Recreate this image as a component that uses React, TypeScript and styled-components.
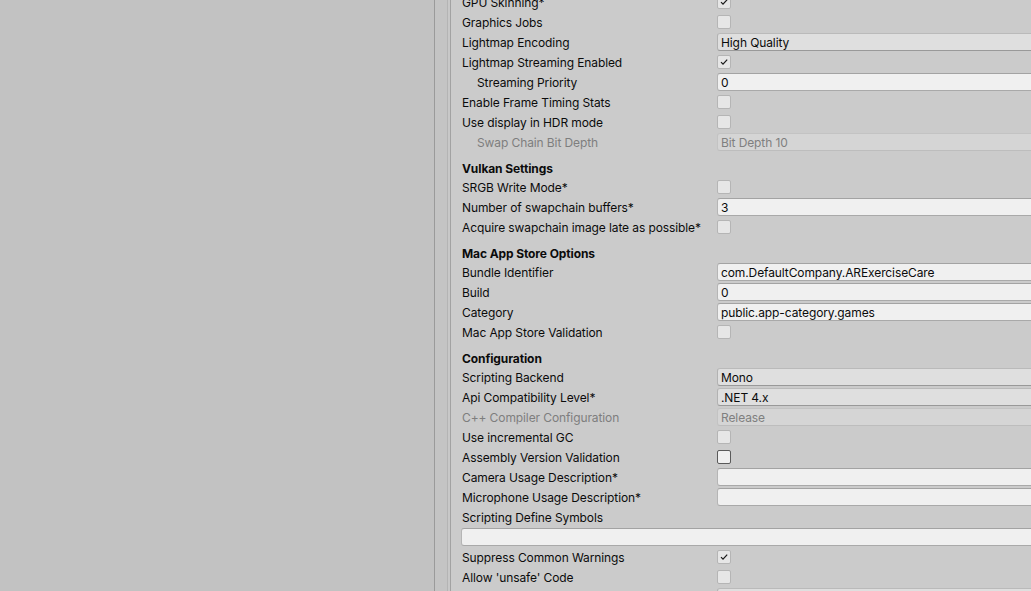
import React from "react";
import styled, { createGlobalStyle } from "styled-components";

const Global = createGlobalStyle`
  html, body { margin: 0; padding: 0; width: 1031px; height: 591px; overflow: hidden; background: #c2c2c2; }
  #root { width: 1031px; height: 591px; }
  * { box-sizing: border-box; }
`;

const Page = styled.div`
  display: flex;
  width: 1031px;
  height: 591px;
  overflow: hidden;
  font-family: Inter, "Noto Sans", "Liberation Sans", sans-serif;
  font-size: 12px;
  letter-spacing: -0.1px;
  color: #0b0b0b;
`;

const LeftPanel = styled.div`
  flex: 0 0 434px;
  background: #c2c2c2;
`;

const Strip = styled.div`
  flex: 0 0 17px;
  background: #c4c4c4;
  border-left: 1px solid #9a9a9a;
  border-right: 1px solid #a2a2a2;
  box-shadow: inset -2px 0 0 #c8c8c8, inset -3px 0 0 #b4b4b4;
`;

const Inspector = styled.div`
  flex: 1 0 auto;
  min-width: 0;
  background: #cbcbcb;
  overflow: hidden;
`;

const Content = styled.div`
  margin-top: -8px;
  padding-left: 11px;
  width: 800px;
  display: flex;
  flex-direction: column;
`;

const Row = styled.div`
  display: flex;
  align-items: center;
  height: 20px;
`;

const Label = styled.div<{ $indent?: boolean; $disabled?: boolean }>`
  flex: 0 0 255px;
  height: 20px;
  padding-top: 2px;
  line-height: 18px;
  padding-left: ${(p) => (p.$indent ? "15px" : "0")};
  color: ${(p) => (p.$disabled ? "#7e7e7e" : "#0b0b0b")};
  white-space: nowrap;
`;

const Header = styled.div`
  height: 19px;
  margin-top: 6px;
  padding-top: 2px;
  line-height: 17px;
  font-weight: 700;
`;

const Field = styled.div<{ $kind: "text" | "popup" | "disabled"; $full?: boolean }>`
  flex: 1 0 auto;
  height: 18px;
  padding-top: 2px;
  line-height: 14px;
  padding-left: 3px;
  margin-left: ${(p) => (p.$full ? "-1px" : "0")};
  border-radius: 3px;
  white-space: nowrap;
  border: 1px solid
    ${(p) => (p.$kind === "disabled" ? "#c3c3c3" : p.$kind === "popup" ? "#b2b2b2" : "#b5b5b5")};
  border-bottom-color: ${(p) =>
    p.$kind === "disabled" ? "#bdbdbd" : p.$kind === "popup" ? "#999" : "#a9a9a9"};
  border-top-color: ${(p) =>
    p.$kind === "text" ? "#a3a3a3" : p.$kind === "popup" ? "#bababa" : "#c3c3c3"};
  background: ${(p) =>
    p.$kind === "disabled" ? "#d5d5d5" : p.$kind === "popup" ? "#dfdfdf" : "#f0f0f0"};
  color: ${(p) => (p.$kind === "disabled" ? "#7f7f7f" : "#0b0b0b")};
`;

const Box = styled.div<{ $focus?: boolean }>`
  flex: 0 0 14px;
  width: 14px;
  height: 14px;
  border-radius: 2px;
  border: 1px solid ${(p) => (p.$focus ? "#5a5a5a" : "#b5b5b5")};
  background: ${(p) => (p.$focus ? "#f0f0f0" : "#e6e6e6")};
  display: flex;
  align-items: center;
  justify-content: center;
`;

const Check = () => (
  <svg width="10" height="10" viewBox="0 0 10 10">
    <path d="M2 5.2 L4 7.2 L8.2 2.6" fill="none" stroke="#1a1a1a" strokeWidth="1.2" />
  </svg>
);

type Item =
  | { t: "header"; label: string }
  | { t: "check"; label: string; on?: boolean; indent?: boolean; focus?: boolean }
  | { t: "field"; label: string; value: string; kind: "text" | "popup" | "disabled"; indent?: boolean }
  | { t: "label"; label: string }
  | { t: "full"; value: string };

const items: Item[] = [
  { t: "check", label: "GPU Skinning*", on: true },
  { t: "check", label: "Graphics Jobs" },
  { t: "field", label: "Lightmap Encoding", value: "High Quality", kind: "popup" },
  { t: "check", label: "Lightmap Streaming Enabled", on: true },
  { t: "field", label: "Streaming Priority", value: "0", kind: "text", indent: true },
  { t: "check", label: "Enable Frame Timing Stats" },
  { t: "check", label: "Use display in HDR mode" },
  { t: "field", label: "Swap Chain Bit Depth", value: "Bit Depth 10", kind: "disabled", indent: true },
  { t: "header", label: "Vulkan Settings" },
  { t: "check", label: "SRGB Write Mode*" },
  { t: "field", label: "Number of swapchain buffers*", value: "3", kind: "text" },
  { t: "check", label: "Acquire swapchain image late as possible*" },
  { t: "header", label: "Mac App Store Options" },
  { t: "field", label: "Bundle Identifier", value: "com.DefaultCompany.ARExerciseCare", kind: "text" },
  { t: "field", label: "Build", value: "0", kind: "text" },
  { t: "field", label: "Category", value: "public.app-category.games", kind: "text" },
  { t: "check", label: "Mac App Store Validation" },
  { t: "header", label: "Configuration" },
  { t: "field", label: "Scripting Backend", value: "Mono", kind: "popup" },
  { t: "field", label: "Api Compatibility Level*", value: ".NET 4.x", kind: "popup" },
  { t: "field", label: "C++ Compiler Configuration", value: "Release", kind: "disabled" },
  { t: "check", label: "Use incremental GC" },
  { t: "check", label: "Assembly Version Validation", focus: true },
  { t: "field", label: "Camera Usage Description*", value: "", kind: "text" },
  { t: "field", label: "Microphone Usage Description*", value: "", kind: "text" },
  { t: "label", label: "Scripting Define Symbols" },
  { t: "full", value: "" },
  { t: "check", label: "Suppress Common Warnings", on: true },
  { t: "check", label: "Allow 'unsafe' Code" },
  { t: "field", label: "", value: "", kind: "popup" },
];

export default function App() {
  return (
    <Page>
      <Global />
      <LeftPanel />
      <Strip />
      <Inspector>
        <Content>
          {items.map((it, i) => {
            switch (it.t) {
              case "header":
                return <Header key={i}>{it.label}</Header>;
              case "check":
                return (
                  <Row key={i}>
                    <Label $indent={it.indent}>{it.label}</Label>
                    <Box $focus={it.focus}>{it.on ? <Check /> : null}</Box>
                  </Row>
                );
              case "field":
                return (
                  <Row key={i}>
                    <Label $indent={it.indent} $disabled={it.kind === "disabled"}>
                      {it.label}
                    </Label>
                    <Field $kind={it.kind}>{it.value}</Field>
                  </Row>
                );
              case "label":
                return (
                  <Row key={i}>
                    <Label>{it.label}</Label>
                  </Row>
                );
              case "full":
                return (
                  <Row key={i}>
                    <Field $kind="text" $full>
                      {it.value}
                    </Field>
                  </Row>
                );
            }
          })}
        </Content>
      </Inspector>
    </Page>
  );
}
